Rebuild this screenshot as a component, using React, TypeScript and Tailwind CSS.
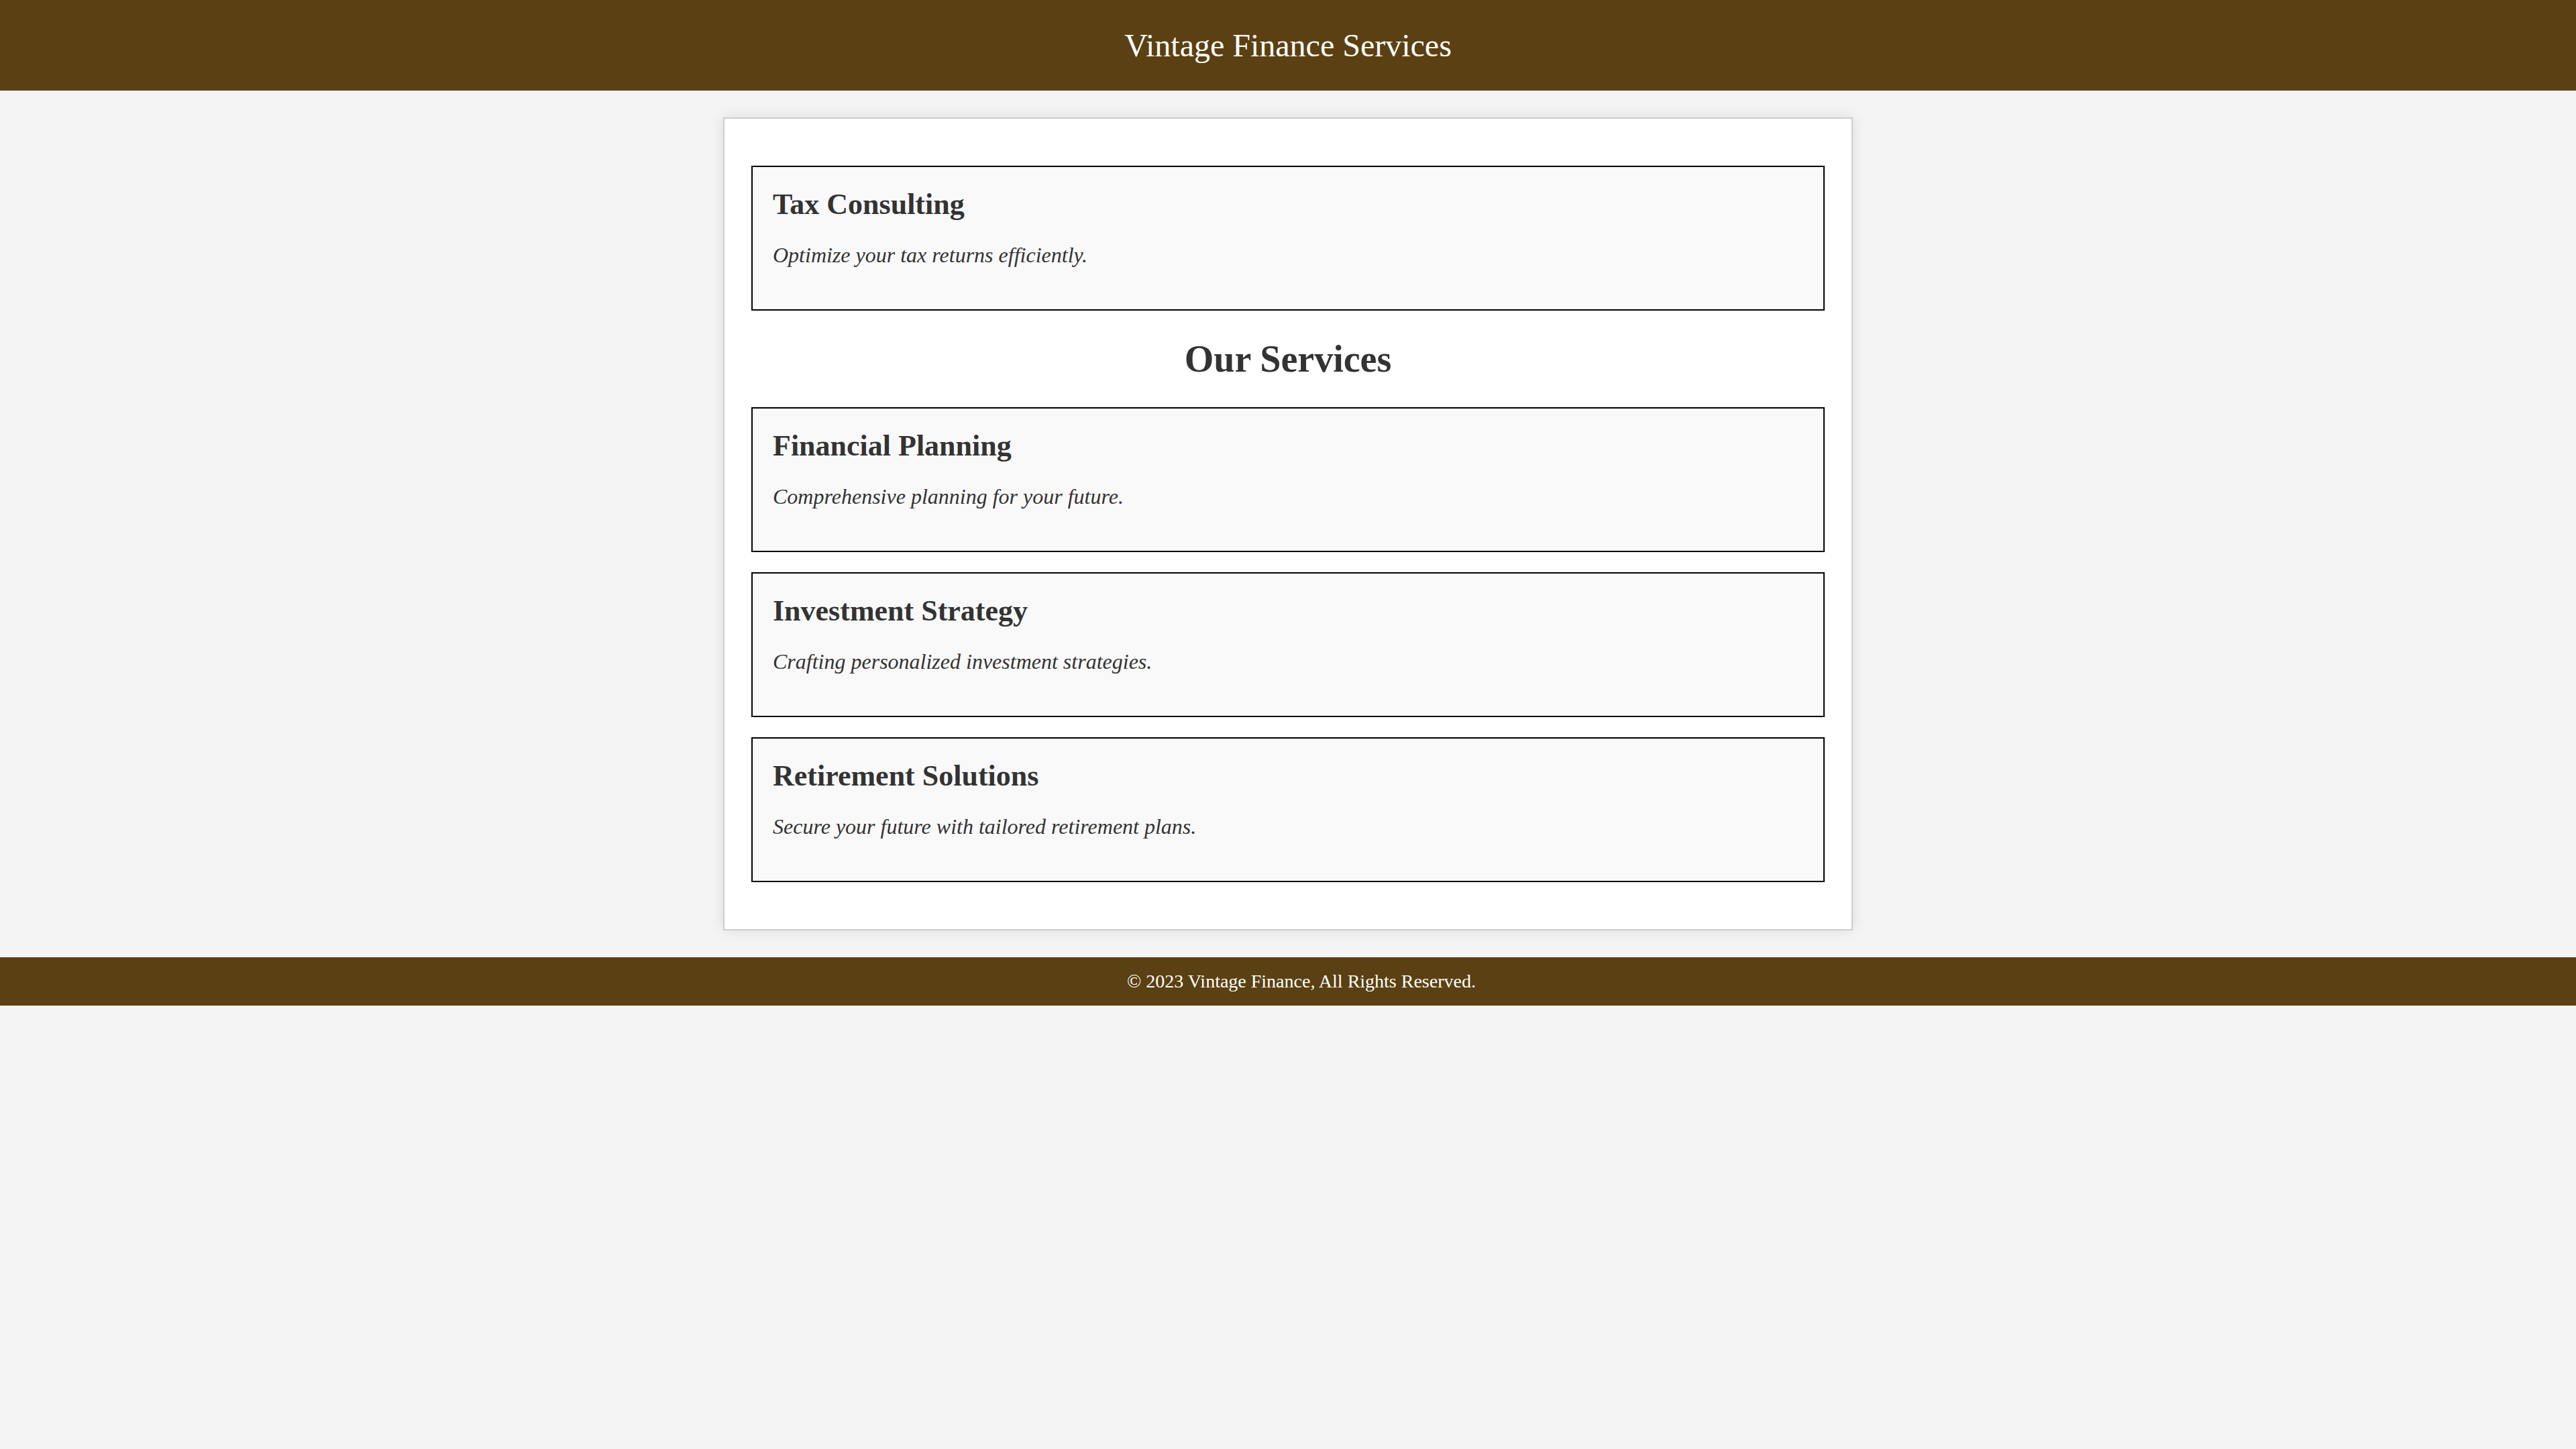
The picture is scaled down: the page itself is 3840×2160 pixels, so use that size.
export default function App() {
  const topService = {
    title: 'Tax Consulting',
    text: 'Optimize your tax returns efficiently.',
  }

  const services = [
    { title: 'Financial Planning', text: 'Comprehensive planning for your future.' },
    { title: 'Investment Strategy', text: 'Crafting personalized investment strategies.' },
    { title: 'Retirement Solutions', text: 'Secure your future with tailored retirement plans.' },
  ]

  return (
    <div className="min-h-screen bg-[#f4f4f4] font-['Liberation_Serif','Times_New_Roman',serif] text-[#333]">
      {/* Header */}
      <header className="bg-[#5a4012] py-[40px] text-center text-white">
        <h1 className="text-[48px] leading-[normal] font-normal">Vintage Finance Services</h1>
      </header>

      {/* Main panel */}
      <main className="mx-auto mt-[40px] w-[1684px] border-2 border-[#cccccc] bg-white px-[40px] py-[40px] shadow-[0_0_20px_rgba(0,0,0,0.1)]">
        <ServiceCard title={topService.title} text={topService.text} />

        <h2 className="my-[40px] text-center text-[56px] leading-[normal] font-bold">Our Services</h2>

        {services.map((service) => (
          <ServiceCard key={service.title} title={service.title} text={service.text} />
        ))}
      </main>

      {/* Footer */}
      <footer className="mt-[40px] bg-[#5a4012] py-[20px] pl-[40px] text-center text-white">
        <p className="text-[28px] leading-[normal]">© 2023 Vintage Finance, All Rights Reserved.</p>
      </footer>
    </div>
  )
}

function ServiceCard({ title, text }: { title: string; text: string }) {
  return (
    <div className="my-[30px] border-2 border-black bg-[#f9f9f9] p-[30px]">
      <h3 className="text-[44px] leading-[normal] font-bold">{title}</h3>
      <p className="mt-[32px] mb-[32px] text-[32px] leading-[normal] italic">{text}</p>
    </div>
  )
}
